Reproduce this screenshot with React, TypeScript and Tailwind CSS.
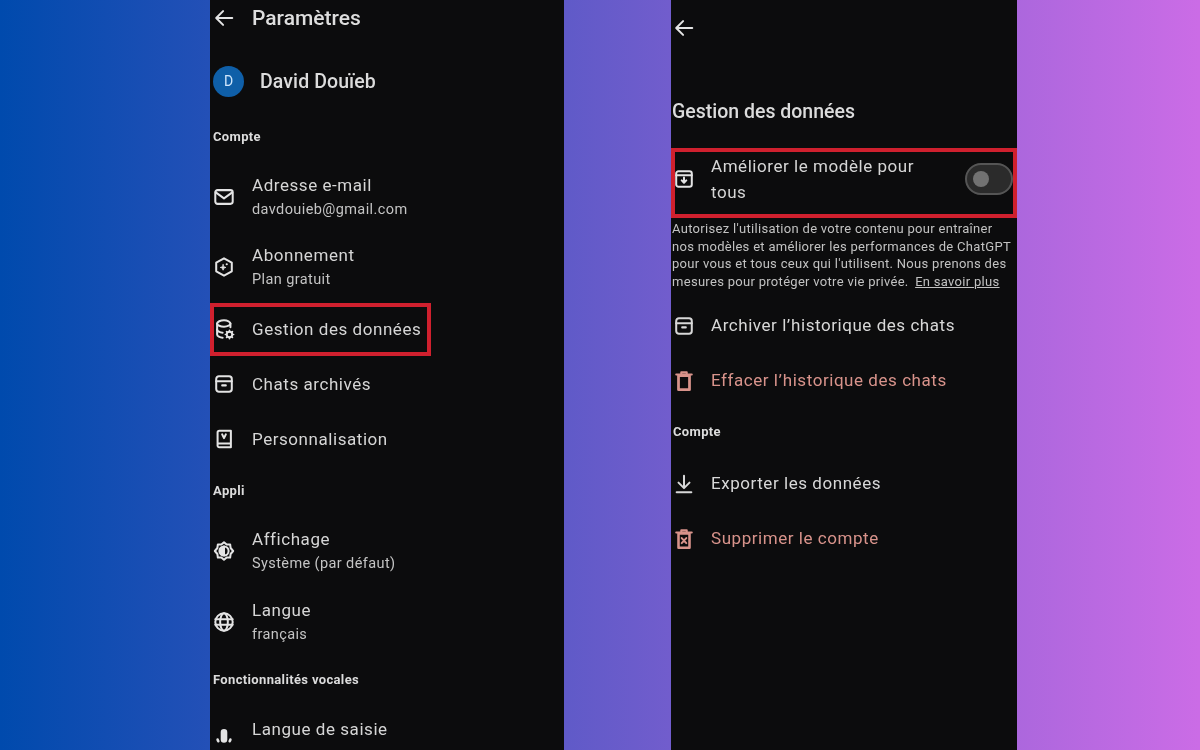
import React from "react";

type IconProps = { className?: string };

const Svg = ({ className, children }: IconProps & { children: React.ReactNode }) => (
  <svg
    viewBox="0 0 24 24"
    fill="none"
    stroke="currentColor"
    strokeWidth={2.2}
    strokeLinecap="round"
    strokeLinejoin="round"
    className={className ?? "h-[22px] w-[22px] overflow-visible"}
  >
    {children}
  </svg>
);

const BackIcon = () => (
  <Svg>
    <path d="M21 12H4M11 4.5 3.5 12l7.5 7.5" />
  </Svg>
);
const MailIcon = () => (
  <Svg>
    <rect x="2.5" y="4.5" width="19" height="15" rx="2.5" />
    <path d="m3 7 9 6.500L21 7" />
  </Svg>
);
const PlanIcon = () => (
  <Svg>
    <path d="M12 2.500 20.500 7.300v9.400L12 21.500l-8.500-4.800V7.300z" />
    <path d="M11 9.500c.4 2 1 2.600 3 3-2 .4-2.600 1-3 3-.4-2-1-2.600-3-3 2-.4 2.600-1 3-3z" fill="currentColor" strokeWidth={1} />
    <circle cx="15" cy="9" r="1.200" fill="currentColor" stroke="none" />
  </Svg>
);
const DataIcon = () => (
  <Svg>
    <path d="M19 10V6c0-1.800-3.100-3.500-7-3.500S4.500 4.200 4.500 6v12c0 1.800 3.100 3.500 6 3.500" />
    <path d="M4.500 6c0 1.800 3.500 3.500 7.500 3.500S19 7.800 19 6M4.500 12.500c0 1.800 3.100 3.500 6 3.500" />
    <circle cx="18" cy="18" r="3" strokeWidth={2} />
    <path d="M18 13.500v1.500M18 21v1.500M13.500 18H15M21 18h1.500M14.800 14.800l1 1M20.200 20.200l1 1M14.800 21.200l1-1M20.200 15.800l1-1" strokeWidth={1.800} />
  </Svg>
);
const ArchiveIcon = () => (
  <Svg>
    <rect x="3.500" y="3.500" width="17" height="17" rx="3" />
    <path d="M3.500 9h17M10 13.500h4" />
  </Svg>
);
const ArchiveDownIcon = () => (
  <Svg>
    <rect x="3.500" y="3.500" width="17" height="17" rx="2.500" />
    <path d="M3.500 8h17" />
    <path d="M12 10.500v5M9.500 13.500l2.500 2.500 2.500-2.500" strokeWidth={2.200} />
  </Svg>
);
const BookIcon = () => (
  <Svg>
    <path d="M5 18.500V5a2 2 0 0 1 2-2h12.500v18H7a2 2 0 0 1-2-2.500zM5.500 17h14" />
    <path d="m10 7 2 4 2-4" />
  </Svg>
);
const DisplayIcon = () => (
  <Svg>
    <path d="M12 2.500l2.900 2.500 3.800-.1.500 3.800L22 12l-2.800 3.300-.500 3.800-3.800-.1L12 21.500 9.100 19l-3.800.1-.500-3.800L2 12l2.800-3.300.500-3.800 3.800.1z" />
    <path d="M12 7a5 5 0 0 0 0 10z" fill="currentColor" />
    <path d="M12 7a5 5 0 0 1 0 10" />
  </Svg>
);
const GlobeIcon = () => (
  <Svg>
    <circle cx="12" cy="12" r="9.500" />
    <path d="M2.500 9h19M2.500 15h19" />
    <ellipse cx="12" cy="12" rx="4.200" ry="9.500" />
  </Svg>
);
const MicIcon = () => (
  <Svg>
    <rect x="9.500" y="13" width="5" height="13" rx="2.500" fill="currentColor" />
    <path d="M5 23.500c.1.700.3 1.200.8 1.800M19 23.500c-.1.700-.3 1.200-.8 1.800" strokeWidth={2.800} />
  </Svg>
);
const TrashIcon = () => (
  <Svg>
    <path d="M3.500 5h17M9 4.500V2.500h6v2" />
    <path d="M6 6v15.500h12V6z" strokeWidth={3} />
  </Svg>
);
const DownloadIcon = () => (
  <Svg>
    <path d="M12 3v13M6 10.500l6 6 6-6M4 21h16" />
  </Svg>
);
const TrashXIcon = () => (
  <Svg>
    <path d="M3.500 5h17M9 4.500V2.500h6v2" />
    <path d="M6 6v15.500h12V6z" strokeWidth={2.800} />
    <path d="m9.500 11 5 5.500m0-5.500-5 5.500" />
  </Svg>
);

const Section = ({ label, className }: { label: string; className: string }) => (
  <div className={`flex h-[30px] items-center text-[13px] font-bold tracking-[0.35px] text-[#dcdcdc] ${className}`}>
    {label}
  </div>
);

const LeftRow = ({ icon, title, sub }: { icon: React.ReactNode; title: string; sub?: string }) => (
  <div className={`flex items-center gap-[17px] ${sub ? "h-[70px]" : "h-[55px]"}`}>
    <span className={`shrink-0 text-[#e4e4e4] ${sub ? "mt-[2px]" : ""}`}>{icon}</span>
    <div className={sub ? "pt-[3px]" : ""}>
      <div className="text-[17px] leading-[24px] tracking-[0.55px] text-[#d6d6d6]">{title}</div>
      {sub && <div className="mt-[1px] text-[14.500px] leading-[24px] tracking-[0.4px] text-[#c4c4c4]">{sub}</div>}
    </div>
  </div>
);

const RightRow = ({ icon, title, danger }: { icon: React.ReactNode; title: string; danger?: boolean }) => (
  <div className={`flex h-[55px] items-center gap-[16px] ${danger ? "text-[#d8938b]" : "text-[#d8d8d8]"}`}>
    <span className="shrink-0">{icon}</span>
    <span className="text-[17px] tracking-[0.55px]">{title}</span>
  </div>
);

export default function App() {
  return (
    <div
      className="flex h-[750px] w-[1200px] overflow-hidden bg-linear-to-r/srgb from-[#004aad] to-[#cb6ce6]"
      style={{ fontFamily: "Roboto, sans-serif" }}
    >
      <div className="ml-[210px] h-full w-[354px] bg-[#0c0c0d] pl-[3px] blur-[0.5px]">
        <div className="flex h-[36px] items-center gap-[17px] text-[#e4e4e4]">
          <BackIcon />
          <span className="mt-[2px] text-[21px] font-medium text-[#dedede]">Paramètres</span>
        </div>
        <div className="mt-[20px] flex h-[50px] items-center gap-[16px]">
          <span className="flex h-[31px] w-[31px] items-center justify-center rounded-full bg-[#0f5fa8] text-[14px] text-[#cfe6fb]">
            D
          </span>
          <span className="mt-[2px] text-[19.500px] font-medium tracking-[0.1px] text-[#dcdcdc]">David Douïeb</span>
        </div>
        <Section label="Compte" className="mt-[16px]" />
        <div className="mt-[9px]">
          <LeftRow icon={<MailIcon />} title="Adresse e-mail" sub="davdouieb@gmail.com" />
          <LeftRow icon={<PlanIcon />} title="Abonnement" sub="Plan gratuit" />
          <div className="relative">
            <LeftRow icon={<DataIcon />} title="Gestion des données" />
            <div className="absolute -left-[3px] top-[2px] h-[53px] w-[221px] border-[4px] border-[#d0202e]" />
          </div>
          <LeftRow icon={<ArchiveIcon />} title="Chats archivés" />
          <LeftRow icon={<BookIcon />} title="Personnalisation" />
        </div>
        <Section label="Appli" className="mt-[10px]" />
        <div className="mt-[9px] flex flex-col gap-[1px]">
          <LeftRow icon={<DisplayIcon />} title="Affichage" sub="Système (par défaut)" />
          <LeftRow icon={<GlobeIcon />} title="Langue" sub="français" />
        </div>
        <Section label="Fonctionnalités vocales" className="mt-[9px]" />
        <div className="mt-[6px]">
          <LeftRow icon={<MicIcon />} title="Langue de saisie" />
        </div>
      </div>

      <div className="ml-[107px] h-full w-[346px] bg-[#0c0c0d] blur-[0.5px]">
        <div className="flex h-[56px] items-center pl-[2px] text-[#e4e4e4]">
          <BackIcon />
        </div>
        <div className="mt-[35px] flex h-[40px] items-center pl-[1px] pt-[2px] text-[19.500px] font-medium text-[#dcdcdc]">
          Gestion des données
        </div>
        <div className="mt-[17px] flex h-[70px] items-center border-[4px] border-[#d0202e] pb-[9px]">
          <span className="ml-[-2px] shrink-0 text-[#e4e4e4]">
            <ArchiveDownIcon />
          </span>
          <span className="ml-[16px] w-[230px] text-[17px] leading-[26px] tracking-[0.55px] text-[#d6d6d6]">
            Améliorer le modèle pour tous
          </span>
          <span className="ml-[24px] flex h-[32px] w-[48px] shrink-0 items-center rounded-full border-[2px] border-[#555555] bg-[#2b2b2b] pl-[6px]">
            <span className="h-[16px] w-[16px] rounded-full bg-[#727272]" />
          </span>
        </div>
        <p className="mt-[2px] whitespace-nowrap pl-[1px] text-[13px] leading-[17.500px] tracking-[0.3px] text-[#c2c2c2]">
          Autorisez l'utilisation de votre contenu pour entraîner
          <br />
          nos modèles et améliorer les performances de ChatGPT
          <br />
          pour vous et tous ceux qui l'utilisent. Nous prenons des
          <br />
          mesures pour protéger votre vie privée. <span className="ml-[3px] underline">En savoir plus</span>
        </p>
        <div className="mt-[8px] pl-[2px]">
          <RightRow icon={<ArchiveIcon />} title="Archiver l’historique des chats" />
          <RightRow icon={<TrashIcon />} title="Effacer l’historique des chats" danger />
        </div>
        <Section label="Compte" className="mt-[9px] pl-[2px]" />
        <div className="mt-[9px] pl-[2px]">
          <RightRow icon={<DownloadIcon />} title="Exporter les données" />
          <RightRow icon={<TrashXIcon />} title="Supprimer le compte" danger />
        </div>
      </div>
    </div>
  );
}
